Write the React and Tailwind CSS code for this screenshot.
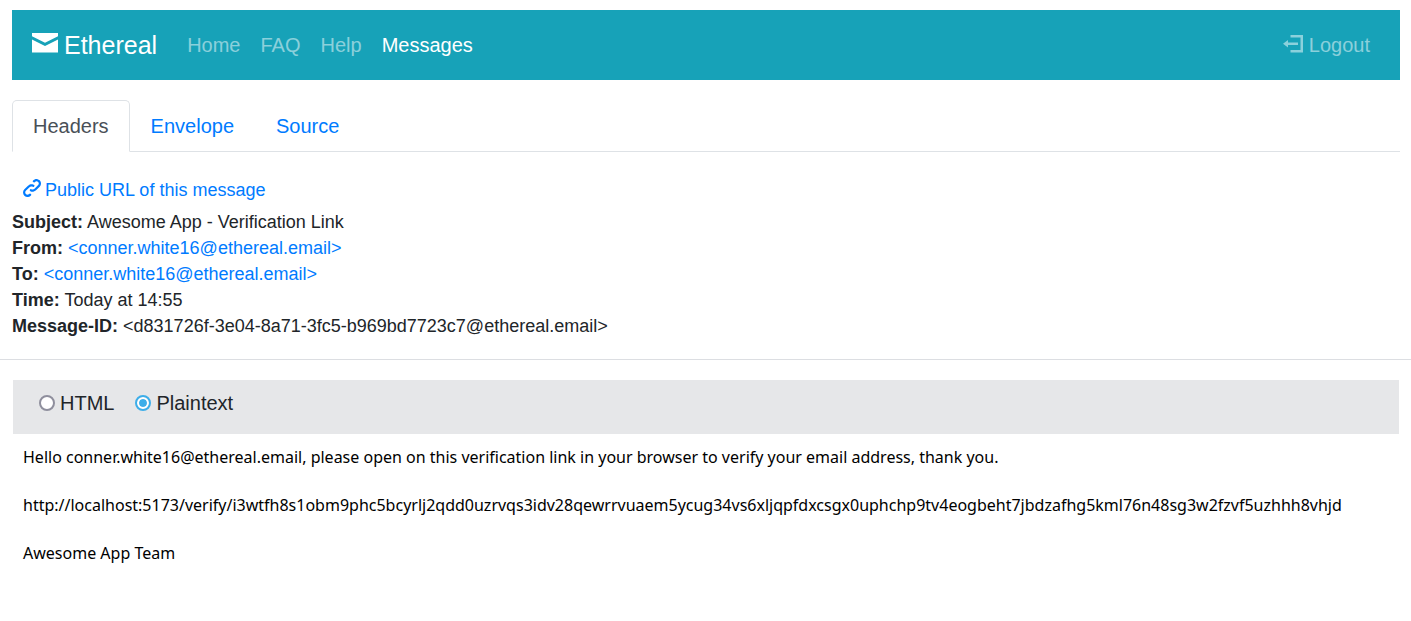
import { useState } from "react";

function Envelope({ className }) {
  return (
    <svg viewBox="0 0 8 6" fill="currentColor" aria-hidden="true" className={className}>
      <path d="M0 0v1l4 2 4-2v-1h-8zm0 2v4h8v-4l-4 2-4-2z" />
    </svg>
  );
}

function LogoutIcon({ className }) {
  return (
    <svg viewBox="0 0 8 8" fill="currentColor" aria-hidden="true" className={className}>
      <path d="M3 0v1h4v5h-4v1h5v-7h-5zm-1 2l-2 1.5 2 1.5v-1h4v-1h-4v-1z" />
    </svg>
  );
}

function LinkIcon({ className }) {
  return (
    <svg viewBox="0 0 8 8" fill="currentColor" aria-hidden="true" className={className}>
      <path d="M5.88.03c-.18.01-.36.03-.53.09-.27.1-.53.25-.75.47a.5.5 0 1 0 .69.69c.11-.11.24-.17.38-.22.35-.12.78-.07 1.06.22.39.39.39 1.04 0 1.44l-1.5 1.5c-.44.44-.8.48-1.06.47-.26-.01-.41-.13-.41-.13a.5.5 0 1 0-.5.88s.34.22.84.25c.5.03 1.2-.16 1.81-.78l1.5-1.5c.78-.78.78-2.04 0-2.81-.28-.28-.61-.45-.97-.53-.18-.04-.38-.04-.56-.03zm-2 2.31c-.5-.02-1.19.15-1.78.75l-1.5 1.5c-.78.78-.78 2.04 0 2.81.56.56 1.36.72 2.06.47.27-.1.53-.25.75-.47a.5.5 0 1 0-.69-.69c-.11.11-.24.17-.38.22-.35.12-.78.07-1.06-.22-.39-.39-.39-1.04 0-1.44l1.5-1.5c.4-.4.75-.45 1.03-.44.28.01.47.09.47.09a.5.5 0 1 0 .44-.88s-.34-.2-.84-.22z" />
    </svg>
  );
}

const navItems = ["Home", "FAQ", "Help", "Messages"];
const tabs = ["Headers", "Envelope", "Source"];
const address = "conner.white16@ethereal.email";

const headers = [
  { name: "Subject", value: "Awesome App - Verification Link" },
  { name: "From", value: `<${address}>`, href: `mailto:${address}` },
  { name: "To", value: `<${address}>`, href: `mailto:${address}` },
  { name: "Time", value: "Today at 14:55" },
  { name: "Message-ID", value: "<d831726f-3e04-8a71-3fc5-b969bd7723c7@ethereal.email>" },
];

function Navbar() {
  return (
    <nav className="flex items-center justify-between bg-[#17a2b8] px-5 py-[15px] leading-[40px]">
      <div className="flex items-center">
        <a href="#" className="mr-5 flex items-center gap-[6px] text-[25px] text-white">
          <Envelope className="mb-1 w-[26px]" />
          Ethereal
        </a>
        {navItems.map((item) => (
          <a
            key={item}
            href="#"
            className={item === "Messages" ? "px-[10px] text-white" : "px-[10px] text-white/50"}
          >
            {item}
          </a>
        ))}
      </div>
      <a href="#" className="flex items-center gap-[6px] px-[10px] text-white/50">
        <LogoutIcon className="w-5" />
        Logout
      </a>
    </nav>
  );
}

function FormatOption({ label, value, format, onChange }) {
  return (
    <label className="flex items-center gap-[5px]">
      <input
        type="radio"
        name="format"
        value={value}
        checked={format === value}
        onChange={() => onChange(value)}
        className="size-4 appearance-none rounded-full border-2 border-[#8f8f9d] bg-white checked:border-[#3daee9] checked:bg-[#3daee9] checked:bg-clip-content checked:p-[2px] checked:shadow-[inset_0_0_0_2px_white]"
      />
      {label}
    </label>
  );
}

export default function App() {
  const [tab, setTab] = useState("Headers");
  const [format, setFormat] = useState("text");

  return (
    <div className="bg-white py-[10px] font-['Liberation_Sans',Arial,sans-serif] text-[20px] leading-[30px] text-[#212529]">
      <div className="pr-[11px] pl-3">
        <Navbar />

        <div role="tablist" className="mt-5 flex border-b border-[#dee2e6]">
          {tabs.map((name) => (
            <button
              key={name}
              type="button"
              role="tab"
              aria-selected={tab === name}
              onClick={() => setTab(name)}
              className={
                tab === name
                  ? "-mb-px rounded-t-[5px] border border-[#dee2e6] border-b-white bg-white px-5 py-[10px] text-[#495057]"
                  : "-mb-px rounded-t-[5px] border border-transparent px-5 py-[10px] text-[#007bff]"
              }
            >
              {name}
            </button>
          ))}
        </div>

        <div className="mt-[25px] text-[18px] leading-[26px]">
          <a href="#" className="mb-[6px] ml-[11px] flex w-fit items-center gap-1 text-[#007bff]">
            <LinkIcon className="mb-1 w-[18px]" />
            Public URL of this message
          </a>
          {headers.map(({ name, value, href }) => (
            <div key={name}>
              <strong>{name}:</strong>{" "}
              {href ? <a href={href} className="text-[#007bff]">{value}</a> : value}
            </div>
          ))}
        </div>
      </div>

      <hr className="mt-5 mb-5 border-[#dcdee2]" />

      <div className="pr-3 pl-[13px]">
        <div className="flex gap-[21px] bg-[#e6e7e9] px-[26px] pt-2 pb-4">
          <FormatOption label="HTML" value="html" format={format} onChange={setFormat} />
          <FormatOption label="Plaintext" value="text" format={format} onChange={setFormat} />
        </div>
        <div className="flex flex-col gap-6 px-[10px] pt-[11px] font-['Noto_Sans',sans-serif] text-[16px] leading-6 text-black">
          <p>Hello {address}, please open on this verification link in your browser to verify your email address, thank you.</p>
          <p>http://localhost:5173/verify/i3wtfh8s1obm9phc5bcyrlj2qdd0uzrvqs3idv28qewrrvuaem5ycug34vs6xljqpfdxcsgx0uphchp9tv4eogbeht7jbdzafhg5kml76n48sg3w2fzvf5uzhhh8vhjd</p>
          <p>Awesome App Team</p>
        </div>
      </div>
    </div>
  );
}
